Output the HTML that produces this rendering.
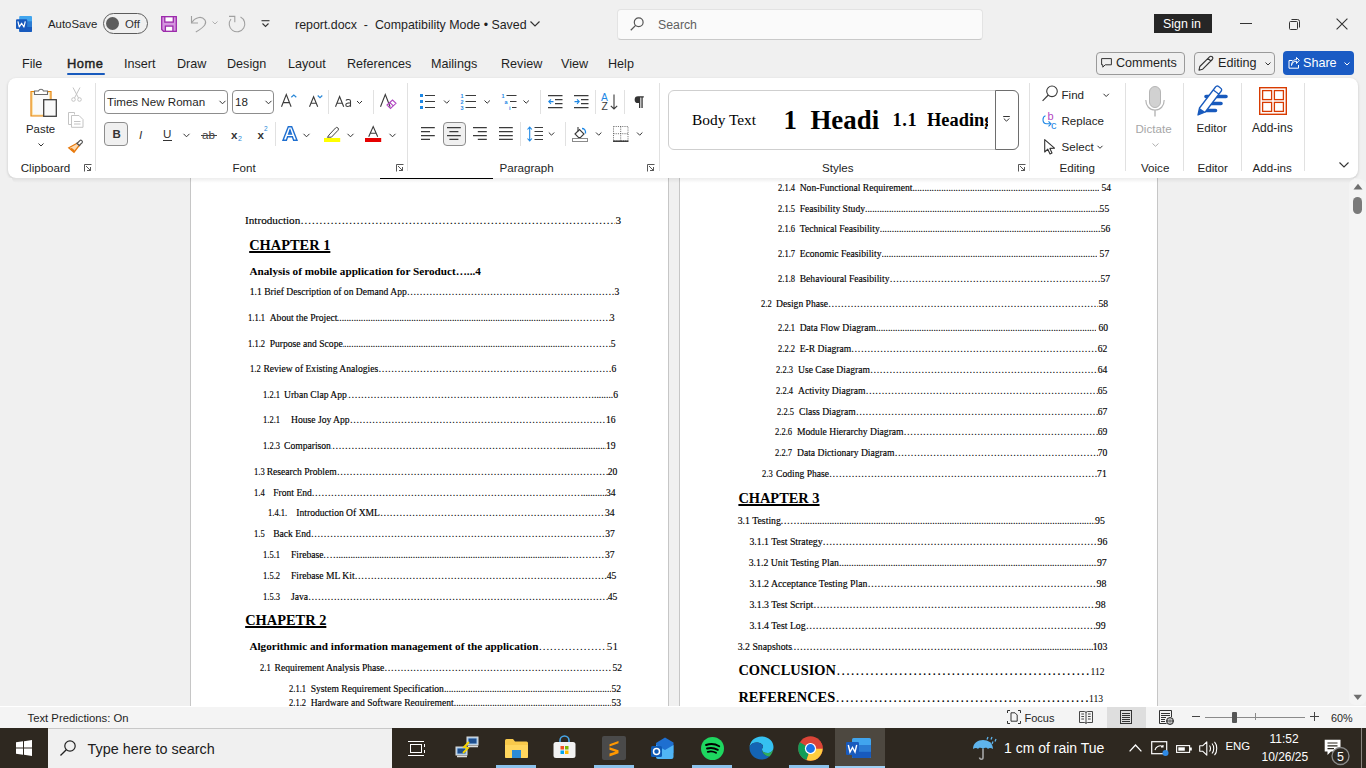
<!DOCTYPE html>
<html><head><meta charset="utf-8">
<style>
*{box-sizing:border-box}
html,body{margin:0;padding:0}
body{width:1366px;height:768px;overflow:hidden;position:relative;background:#f0f0f0;font-family:"Liberation Sans",sans-serif;color:#1f1f1f}
.a{position:absolute}
.t{position:absolute;white-space:nowrap;line-height:1}
svg{position:absolute;overflow:visible}
/* ribbon */
#rib{position:absolute;left:8px;top:78px;width:1350px;height:100px;background:#fff;border-radius:8px;box-shadow:0 1px 3px rgba(0,0,0,.18)}
.sep{position:absolute;width:1px;background:#e1e1e1}
.rl{position:absolute;white-space:nowrap;line-height:1;font-size:11.6px;color:#242424}
/* doc */
#doc{position:absolute;left:0;top:178px;width:1366px;height:528px;background:#f0f0f0;overflow:hidden}
.pg{position:absolute;top:-20px;height:600px;background:#fff;border-left:1px solid #c6c6c6;border-right:1px solid #c6c6c6}
.l{position:absolute;display:flex;white-space:nowrap;line-height:1;font-family:"Liberation Serif",serif;color:#000;font-size:9.6px;-webkit-text-stroke:0.14px #000}
.n{transform:scaleX(.89);transform-origin:0 0}
.l i{flex:1;overflow:hidden;font-style:normal}
.l i.s::before{content:"……………………………………………………………………………………………………………………………………………………………………………………………………"}
.l i.d::before{content:"................................................................................................................................................................................................................................................................................................"}
.b{font-weight:bold;-webkit-text-stroke:0}
.l span{position:relative;z-index:1;background:#fff}
.l i.abs{position:absolute;top:0;bottom:0;overflow:hidden;white-space:nowrap}
.l i.segw{flex:1;overflow:visible}
.u{text-decoration:underline;text-decoration-thickness:1.7px;text-underline-offset:0.6px}
/* status + taskbar */
#status{position:absolute;left:0;top:706px;width:1366px;height:22px;background:#f4f4f4;border-top:1px solid #fff}
#task{position:absolute;left:0;top:728px;width:1366px;height:40px;background:#2e2820}
</style></head>
<body>
<!-- TITLE BAR -->
<svg style="left:16px;top:16px" width="16" height="16" viewBox="0 0 16 16"><rect x="3.2" y="0" width="12.8" height="16" rx="1" fill="#41a5ee"/><rect x="3.2" y="5.3" width="12.8" height="5.4" fill="#2b7cd3"/><path d="M3.2 10.7 H16 V15 A1 1 0 0 1 15 16 H4.2 A1 1 0 0 1 3.2 15 Z" fill="#185abd"/><rect x="0" y="3.2" width="11.2" height="9.8" rx="1" fill="#185abd"/><path d="M1.9 5.3 L3.3 11 L5.6 7.2 L7.9 11 L9.3 5.3" stroke="#fff" stroke-width="1.2" fill="none" stroke-linejoin="round"/></svg>
<div class="t" style="left:48px;top:18.5px;font-size:11.4px;color:#1f1f1f">AutoSave</div>
<div class="a" style="left:103px;top:13px;width:45px;height:21px;border:1px solid #5c5c5c;border-radius:11px"></div>
<div class="a" style="left:106px;top:17px;width:13px;height:13px;border-radius:50%;background:#5c5c5c"></div>
<div class="t" style="left:125px;top:18.5px;font-size:11.4px;color:#333">Off</div>
<svg style="left:161px;top:16px" width="16" height="16" viewBox="0 0 16 16"><path d="M0.7 0.7 H15.3 V15.3 H2.5 L0.7 13.5 Z" fill="#d596df" stroke="#9c2aab" stroke-width="1.3"/><rect x="3.8" y="0.7" width="8.5" height="5.4" fill="#fff" stroke="#9c2aab" stroke-width="1.3"/><rect x="4.4" y="10.1" width="7.5" height="5.2" fill="#fff" stroke="#9c2aab" stroke-width="1.3"/></svg>
<svg style="left:186px;top:12px" width="24" height="24" viewBox="0 0 24 24"><path d="M5.5 4 V11 H12" stroke="#a0a0a0" stroke-width="1.1" fill="none"/><path d="M6 10.5 C8.5 5.5 15.5 3.5 18.8 7.8 C21 11 19.5 14.5 9.8 20" stroke="#a0a0a0" stroke-width="1.1" fill="none"/></svg>
<svg style="left:212px;top:21px" width="6" height="4" viewBox="0 0 6 4"><path d="M0.5 0.5 L3 3 L5.5 0.5" stroke="#b0b0b0" stroke-width="1" fill="none"/></svg>
<svg style="left:226px;top:12px" width="24" height="24" viewBox="0 0 24 24"><path d="M14.5 5 A7.8 7.8 0 1 1 5 7" stroke="#a0a0a0" stroke-width="1.1" fill="none"/><path d="M3 4.4 H8.8 V10.3" stroke="#a0a0a0" stroke-width="1.1" fill="none"/></svg>
<svg style="left:261px;top:20px" width="9" height="8" viewBox="0 0 9 8"><path d="M0.5 0.7 H8.5" stroke="#333" stroke-width="1.1"/><path d="M1.5 3.5 L4.5 6.5 L7.5 3.5" stroke="#333" stroke-width="1.1" fill="none"/></svg>
<div class="t" style="left:295px;top:18.5px;font-size:12.4px;color:#1f1f1f;word-spacing:0px">report.docx&nbsp; - &nbsp;Compatibility Mode • Saved</div>
<svg style="left:530px;top:21px" width="10" height="6" viewBox="0 0 10 6"><path d="M0.5 0.5 L5 5 L9.5 0.5" stroke="#333" stroke-width="1.2" fill="none"/></svg>
<!-- search -->
<div class="a" style="left:617px;top:9px;width:366px;height:31px;background:#fafafa;border:1px solid #e3e3e3;border-bottom-color:#c9c9c9;border-radius:4px"></div>
<svg style="left:630px;top:17px" width="14" height="14" viewBox="0 0 14 14"><circle cx="8.7" cy="5.3" r="4.4" stroke="#555" stroke-width="1.2" fill="none"/><path d="M5.6 8.4 L0.8 13.2" stroke="#555" stroke-width="1.3"/></svg>
<div class="t" style="left:658px;top:18.5px;font-size:12.3px;color:#5f5f5f">Search</div>
<!-- sign in, window controls -->
<div class="a" style="left:1154px;top:14px;width:58px;height:19px;background:#262626"></div>
<div class="t" style="left:1163px;top:18px;font-size:12.4px;color:#fff">Sign in</div>
<div class="a" style="left:1240px;top:23px;width:12px;height:1px;background:#333"></div>
<svg style="left:1289px;top:19px" width="11" height="11" viewBox="0 0 11 11"><rect x="0.5" y="2.5" width="8" height="8" rx="1" stroke="#333" fill="none"/><path d="M2.5 0.5 H8.5 A2 2 0 0 1 10.5 2.5 V8.5" stroke="#333" fill="none"/></svg>
<svg style="left:1336px;top:18px" width="12" height="12" viewBox="0 0 12 12"><path d="M0.6 0.6 L11.4 11.4 M11.4 0.6 L0.6 11.4" stroke="#333" stroke-width="1.1"/></svg>

<!-- TABS -->
<div class="t" style="left:22px;top:57.5px;font-size:12.6px">File</div>
<div class="t" style="left:67px;top:57.5px;font-size:12.9px;color:#1f1f1f;-webkit-text-stroke:0.45px #1f1f1f;letter-spacing:0.55px">Home</div>
<div class="a" style="left:67px;top:73px;width:38px;height:2px;background:#185abd;border-radius:1px"></div>
<div class="t" style="left:124px;top:57.5px;font-size:12.6px">Insert</div>
<div class="t" style="left:177px;top:57.5px;font-size:12.6px">Draw</div>
<div class="t" style="left:227px;top:57.5px;font-size:12.6px">Design</div>
<div class="t" style="left:288px;top:57.5px;font-size:12.6px">Layout</div>
<div class="t" style="left:347px;top:57.5px;font-size:12.6px">References</div>
<div class="t" style="left:431px;top:57.5px;font-size:12.6px">Mailings</div>
<div class="t" style="left:501px;top:57.5px;font-size:12.6px">Review</div>
<div class="t" style="left:561px;top:57.5px;font-size:12.6px">View</div>
<div class="t" style="left:608px;top:57.5px;font-size:12.6px">Help</div>

<div class="a" style="left:1095.5px;top:51.5px;width:89px;height:23px;border:1px solid #9a9a9a;border-radius:4px;background:transparent"></div>
<div class="t" style="left:1116px;top:57px;font-size:12.6px">Comments</div>
<div class="a" style="left:1193.5px;top:51.5px;width:81px;height:23px;border:1px solid #9a9a9a;border-radius:4px;background:transparent"></div>
<div class="t" style="left:1218px;top:57px;font-size:12.6px">Editing</div>
<div class="a" style="left:1283px;top:51px;width:71px;height:24px;border-radius:4px;background:#1a5bc4"></div>
<div class="t" style="left:1303px;top:57px;font-size:12.6px;color:#fff">Share</div>

<!-- RIBBON -->
<div id="rib"></div>
<!--RIB_START-->
<!-- Clipboard group -->
<svg style="left:30px;top:87px" width="27" height="30" viewBox="0 0 27 30">
  <path d="M1 4.5 H21 V14 H13.5 V29 H1 Z" fill="#fbe3b0" stroke="#e8860c" stroke-width="1.2"/>
  <path d="M3 6 H19 V14 H13.5 V27.5 H3 Z" fill="#fafafa"/>
  <path d="M4.5 7.5 V4 H8.5 A2.7 2.7 0 0 1 13.5 4 H17.5 V7.5 Z" fill="#fff" stroke="#6b6b6b" stroke-width="1.1"/>
  <rect x="13.7" y="12.7" width="12.6" height="16.6" fill="#fafafa" stroke="#404040" stroke-width="1.3"/>
</svg>
<div class="rl" style="left:26px;top:123.5px;font-size:11.4px">Paste</div>
<svg style="left:37.5px;top:143px" width="6" height="4" viewBox="0 0 6 4"><path d="M0.5 0.5 L3 3 L5.5 0.5" stroke="#333" stroke-width="1" fill="none"/></svg>
<svg style="left:71px;top:86.5px" width="11" height="15" viewBox="0 0 11 15">
  <path d="M2 0.5 L7.5 11 M9 0.5 L3.5 11" stroke="#c4c4c4" stroke-width="1"/>
  <circle cx="2.5" cy="12.5" r="1.8" stroke="#c4c4c4" fill="none"/><circle cx="8.5" cy="12.5" r="1.8" stroke="#c4c4c4" fill="none"/>
</svg>
<svg style="left:68px;top:112px" width="16" height="16" viewBox="0 0 16 16">
  <path d="M0.5 0.5 H6.5 V2.5 M0.5 0.5 V12.5 H3.5" stroke="#c4c4c4" fill="none"/>
  <path d="M3.5 3.5 H11 L15 7.5 V15.3 H3.5 Z" stroke="#c4c4c4" fill="#fff"/>
  <path d="M6 9.5 H12.5 M6 12 H12.5" stroke="#c4c4c4"/>
</svg>
<svg style="left:68px;top:138px" width="16" height="15" viewBox="0 0 16 15">
  <path d="M9.5 5 L0.8 9.8 L6 14.2 L12 6.5 Z" fill="#fcd9b0" stroke="#e8790c" stroke-width="1.3"/>
  <path d="M3 10.5 L6.2 13" stroke="#e8790c" stroke-width="1.6"/>
  <path d="M9 5.5 L11.8 2.6 A1.6 1.6 0 0 1 14.2 4.6 L11.6 7" stroke="#555" stroke-width="1.2" fill="#fff"/>
  <path d="M8.5 5 L12 8" stroke="#555" stroke-width="1.3"/>
</svg>
<div class="rl" style="left:20.7px;top:162px">Clipboard</div>
<svg style="left:84px;top:164px" width="8" height="8" viewBox="0 0 8 8"><path d="M0.5 7.5 V0.5 H7.5" stroke="#444" fill="none" stroke-width="0.9"/><path d="M2 2 L6.5 6.5 M3 6.5 H6.5 V3" stroke="#444" fill="none" stroke-width="0.9"/></svg>
<div class="sep" style="left:95px;top:83px;height:88px"></div>

<!-- Font group -->
<div class="a" style="left:104px;top:90px;width:124px;height:24px;border:1px solid #8d8d8d;border-radius:4px;background:#fff"></div>
<div class="t" style="left:107px;top:95.5px;font-size:11.6px;color:#1f1f1f">Times New Roman</div>
<svg style="left:219px;top:100px" width="7" height="5" viewBox="0 0 7 5"><path d="M0.5 0.8 L3.5 3.8 L6.5 0.8" stroke="#333" stroke-width="1" fill="none"/></svg>
<div class="a" style="left:232px;top:90px;width:42px;height:24px;border:1px solid #8d8d8d;border-radius:4px;background:#fff"></div>
<div class="t" style="left:235px;top:96px;font-size:11.6px;color:#1f1f1f">18</div>
<svg style="left:264.5px;top:100px" width="7" height="5" viewBox="0 0 7 5"><path d="M0.5 0.8 L3.5 3.8 L6.5 0.8" stroke="#333" stroke-width="1" fill="none"/></svg>
<svg style="left:281px;top:94px" width="16" height="13" viewBox="0 0 16 13"><path d="M0.5 12.8 L5.3 0.5 L10.1 12.8 M2.2 8.6 H8.4" stroke="#3b3b3b" stroke-width="1.1" fill="none"/><path d="M10.3 3.3 L12.8 1 L15.3 3.3" stroke="#2b88d8" stroke-width="1.2" fill="none"/></svg>
<svg style="left:308.5px;top:95px" width="14" height="12" viewBox="0 0 14 12"><path d="M0.5 11.8 L4.6 1.8 L8.7 11.8 M2 8.3 H7.2" stroke="#3b3b3b" stroke-width="1.1" fill="none"/><path d="M8.7 0.5 L11 2.7 L13.3 0.5" stroke="#2b88d8" stroke-width="1.2" fill="none"/></svg>
<div class="sep" style="left:328px;top:90px;height:24px"></div>
<svg style="left:335px;top:96px" width="28" height="11" viewBox="0 0 28 11"><path d="M0.5 10.8 L4.6 0.5 L8.7 10.8 M2 7.3 H7.2" stroke="#3b3b3b" stroke-width="1.1" fill="none"/><path d="M11 4.5 C11.5 3 15.5 3 15.5 5 V10.8 M15.5 6.8 C12 6.8 10.8 7.5 10.8 9 C10.8 10.8 14 11 15.5 9" stroke="#3b3b3b" stroke-width="1.1" fill="none"/><path d="M22 5 L24.5 7.5 L27 5" stroke="#333" stroke-width="1" fill="none"/></svg>
<div class="sep" style="left:373px;top:90px;height:24px"></div>
<svg style="left:380px;top:94px" width="17" height="16" viewBox="0 0 17 16"><path d="M0.5 12.8 L5.3 0.5 L10.1 12.8" stroke="#3b3b3b" stroke-width="1.1" fill="none"/><path d="M7 11 L12.5 6 L16 9.3 L10.5 14.5 Z M9.8 8.5 L13.3 11.8" stroke="#b146c2" stroke-width="1.1" fill="none"/></svg>
<div class="sep" style="left:407px;top:83px;height:88px"></div>

<div class="a" style="left:104px;top:122px;width:24px;height:24px;border:1px solid #8d8d8d;border-radius:4px;background:#f0f0f0"></div>
<div class="t" style="left:112.5px;top:128.5px;font-size:11.5px;font-weight:bold;color:#333">B</div>
<div class="t" style="left:139px;top:129px;font-size:11.6px;font-style:italic;color:#333">I</div>
<div class="t" style="left:163px;top:128px;font-size:11.6px;color:#333">U</div>
<div class="a" style="left:163px;top:140px;width:9px;height:1px;background:#333"></div>
<svg style="left:183px;top:132.5px" width="7" height="5" viewBox="0 0 7 5"><path d="M0.5 0.8 L3.5 3.8 L6.5 0.8" stroke="#333" stroke-width="1" fill="none"/></svg>
<div class="t" style="left:202px;top:128.5px;font-size:11.6px;color:#444">ab</div>
<div class="a" style="left:201px;top:135px;width:16px;height:1px;background:#444"></div>
<div class="t" style="left:231px;top:128.5px;font-size:11.6px;color:#333;font-weight:bold">x</div>
<div class="t" style="left:238px;top:135px;font-size:7px;color:#2b88d8">2</div>
<div class="t" style="left:257.5px;top:128.5px;font-size:11.6px;color:#333;font-weight:bold">x</div>
<div class="t" style="left:264px;top:126px;font-size:6.5px;color:#2b88d8">2</div>
<div class="sep" style="left:275px;top:122px;height:24px"></div>
<svg style="left:282px;top:126px" width="16" height="15" viewBox="0 0 16 15"><path d="M1 14.2 L6.3 0.8 H9.7 L15 14.2 H11.6 L10.4 10.8 H5.6 L4.4 14.2 Z M6.6 8 H9.4 L8 4 Z" fill="#fff" stroke="#1e6fd0" stroke-width="1.4"/><path d="M7 5.5 L8 3.5 L9 5.5" fill="#1e6fd0"/></svg>
<svg style="left:303px;top:132.5px" width="7" height="5" viewBox="0 0 7 5"><path d="M0.5 0.8 L3.5 3.8 L6.5 0.8" stroke="#333" stroke-width="1" fill="none"/></svg>
<svg style="left:324px;top:126px" width="17" height="16" viewBox="0 0 17 16"><path d="M5 9 L11.5 2 A1.6 1.6 0 0 1 14 4.3 L7.4 11.2 L3.6 11.2 Z" stroke="#444" stroke-width="1" fill="#fff"/><path d="M3.6 11.2 L2 12.5 H5.5" fill="#666"/><rect x="0" y="12" width="16.2" height="4" fill="#ffff00"/></svg>
<svg style="left:347px;top:132.5px" width="7" height="5" viewBox="0 0 7 5"><path d="M0.5 0.8 L3.5 3.8 L6.5 0.8" stroke="#333" stroke-width="1" fill="none"/></svg>
<svg style="left:365px;top:126px" width="17" height="16" viewBox="0 0 17 16"><path d="M3.7 10.8 L8.2 0.5 L12.7 10.8 M5.2 7.3 H11.2" stroke="#3b3b3b" stroke-width="1.1" fill="none"/><rect x="0" y="12" width="16.2" height="4" fill="#e60000"/></svg>
<svg style="left:388.5px;top:132.5px" width="7" height="5" viewBox="0 0 7 5"><path d="M0.5 0.8 L3.5 3.8 L6.5 0.8" stroke="#333" stroke-width="1" fill="none"/></svg>
<div class="rl" style="left:232.5px;top:162px">Font</div>
<svg style="left:396px;top:164px" width="8" height="8" viewBox="0 0 8 8"><path d="M0.5 7.5 V0.5 H7.5" stroke="#444" fill="none" stroke-width="0.9"/><path d="M2 2 L6.5 6.5 M3 6.5 H6.5 V3" stroke="#444" fill="none" stroke-width="0.9"/></svg>

<!-- Paragraph group -->
<svg style="left:420px;top:94px" width="30" height="15" viewBox="0 0 30 15"><rect x="0" y="0" width="3" height="3" fill="#1e88e5"/><rect x="0" y="6" width="3" height="3" fill="#1e88e5"/><rect x="0" y="12" width="3" height="3" fill="#1e88e5"/><path d="M5 1.5 H15 M5 7.5 H15 M5 13.5 H15" stroke="#3b3b3b" stroke-width="1.1"/><path d="M24 6.5 L26.7 9.2 L29.4 6.5" stroke="#333" fill="none"/></svg>
<svg style="left:460px;top:93px" width="31" height="17" viewBox="0 0 31 17"><text x="0.5" y="5" font-size="5.5" font-family="Liberation Sans" fill="#1e88e5" font-weight="bold">1</text><text x="0.5" y="11" font-size="5.5" font-family="Liberation Sans" fill="#1e88e5" font-weight="bold">2</text><text x="0.5" y="17" font-size="5.5" font-family="Liberation Sans" fill="#1e88e5" font-weight="bold">3</text><path d="M5.5 2.5 H16 M5.5 8.5 H16 M5.5 14.5 H16" stroke="#3b3b3b" stroke-width="1.1"/><path d="M24.5 7.5 L27.2 10.2 L29.9 7.5" stroke="#333" fill="none"/></svg>
<svg style="left:501px;top:93px" width="29" height="17" viewBox="0 0 29 17"><text x="0.5" y="5" font-size="5.5" font-family="Liberation Sans" fill="#1e88e5" font-weight="bold">1</text><text x="3.5" y="11" font-size="5.5" font-family="Liberation Sans" fill="#1e88e5" font-weight="bold">a</text><text x="8" y="17" font-size="5.5" font-family="Liberation Sans" fill="#1e88e5" font-weight="bold">i</text><path d="M5.5 2.5 H15.5 M9 8.5 H15.5 M11 14.5 H15.5" stroke="#3b3b3b" stroke-width="1.1"/><path d="M22.5 7.5 L25.2 10.2 L27.9 7.5" stroke="#333" fill="none"/></svg>
<div class="sep" style="left:540px;top:90px;height:24px"></div>
<svg style="left:547.5px;top:94.5px" width="15" height="14" viewBox="0 0 15 14"><path d="M0 0.6 H14.5 M7 4.6 H14.5 M7 8.6 H14.5 M0 12.6 H14.5" stroke="#3b3b3b" stroke-width="1.1"/><path d="M5.5 6.6 H0.8 M3 4.4 L0.8 6.6 L3 8.8" stroke="#1e88e5" stroke-width="1.1" fill="none"/></svg>
<svg style="left:573.5px;top:94.5px" width="15" height="14" viewBox="0 0 15 14"><path d="M0 0.6 H14.5 M7 4.6 H14.5 M7 8.6 H14.5 M0 12.6 H14.5" stroke="#3b3b3b" stroke-width="1.1"/><path d="M0.5 6.6 H5.2 M3 4.4 L5.2 6.6 L3 8.8" stroke="#1e88e5" stroke-width="1.1" fill="none"/></svg>
<div class="sep" style="left:595px;top:90px;height:24px"></div>
<svg style="left:601px;top:94px" width="18" height="16" viewBox="0 0 18 16"><text x="0" y="7.3" font-size="10.3" font-family="Liberation Sans" fill="#1e88e5">A</text><text x="0.5" y="15.6" font-size="10.3" font-family="Liberation Sans" fill="#3b3b3b">Z</text><path d="M13 0.5 V15 M9.8 11.8 L13 15 L16.2 11.8" stroke="#3b3b3b" stroke-width="1.1" fill="none"/></svg>
<div class="sep" style="left:624px;top:90px;height:24px"></div>
<svg style="left:634px;top:96px" width="10" height="12" viewBox="0 0 10 12"><path d="M4 0.3 H9.8 V1.6 H8.7 V12 H7.4 V1.6 H6.3 V12 H5 V7 H4 A3.35 3.35 0 0 1 4 0.3 Z" fill="#333"/></svg>

<svg style="left:421px;top:127px" width="14" height="13" viewBox="0 0 14 13"><path d="M0 0.6 H13.8 M0 4.6 H9 M0 8.6 H13.8 M0 12.4 H9" stroke="#3b3b3b" stroke-width="1.1"/></svg>
<div class="a" style="left:442.5px;top:122px;width:23px;height:23.5px;border:1px solid #8d8d8d;border-radius:4px;background:#f0f0f0"></div>
<svg style="left:447px;top:127px" width="14" height="13" viewBox="0 0 14 13"><path d="M0 0.6 H13.8 M2.4 4.6 H11.4 M0 8.6 H13.8 M2.4 12.4 H11.4" stroke="#3b3b3b" stroke-width="1.1"/></svg>
<svg style="left:473px;top:127px" width="14" height="13" viewBox="0 0 14 13"><path d="M0 0.6 H13.8 M4.8 4.6 H13.8 M0 8.6 H13.8 M4.8 12.4 H13.8" stroke="#3b3b3b" stroke-width="1.1"/></svg>
<svg style="left:499px;top:127px" width="14" height="13" viewBox="0 0 14 13"><path d="M0 0.6 H13.8 M0 4.6 H13.8 M0 8.6 H13.8 M0 12.4 H13.8" stroke="#3b3b3b" stroke-width="1.1"/></svg>
<div class="sep" style="left:520px;top:122px;height:24px"></div>
<svg style="left:527px;top:126px" width="28" height="16" viewBox="0 0 28 16"><path d="M2.7 1 V15 M0.5 3.5 L2.7 1 L4.9 3.5 M0.5 12.5 L2.7 15 L4.9 12.5" stroke="#1e88e5" stroke-width="1.1" fill="none"/><path d="M7.5 1.5 H16 M7.5 5.5 H16 M7.5 9.5 H16 M7.5 13.5 H16" stroke="#3b3b3b" stroke-width="1"/><path d="M21.8 6.5 L24.5 9.2 L27.2 6.5" stroke="#333" fill="none"/></svg>
<div class="sep" style="left:565px;top:122px;height:24px"></div>
<svg style="left:572px;top:126px" width="30" height="16" viewBox="0 0 30 16"><path d="M3 8 L7.5 3.5 L12 8 L8.5 11.5 H6.5 Z" stroke="#3b3b3b" stroke-width="1.1" fill="#fff"/><path d="M6 1 V5.5" stroke="#3b3b3b" stroke-width="1.1"/><path d="M10 2.5 C12 2.5 14 4 13.5 7.5" stroke="#1e88e5" stroke-width="1.3" fill="none"/><rect x="0.5" y="12.5" width="15" height="3" stroke="#8a8a8a" fill="#fff"/><path d="M24 6.5 L26.7 9.2 L29.4 6.5" stroke="#333" fill="none"/></svg>
<svg style="left:613px;top:126px" width="30" height="16" viewBox="0 0 30 16"><path d="M0.5 0.5 H15 V15 H0.5 Z M0.5 7.7 H15 M7.7 0.5 V15" stroke="#555" stroke-width="0.9" stroke-dasharray="1 1.2" fill="none"/><path d="M0 15.2 H15.5" stroke="#222" stroke-width="1.3"/><path d="M24 6.5 L26.7 9.2 L29.4 6.5" stroke="#333" fill="none"/></svg>
<div class="rl" style="left:499.5px;top:162px">Paragraph</div>
<svg style="left:647px;top:164px" width="8" height="8" viewBox="0 0 8 8"><path d="M0.5 7.5 V0.5 H7.5" stroke="#444" fill="none" stroke-width="0.9"/><path d="M2 2 L6.5 6.5 M3 6.5 H6.5 V3" stroke="#444" fill="none" stroke-width="0.9"/></svg>
<div class="sep" style="left:659px;top:83px;height:88px"></div>

<!-- Styles -->
<div class="a" style="left:668px;top:90px;width:351px;height:60px;border:1px solid #cfcfcf;border-radius:6px;background:#fff;overflow:hidden">
  <div class="t" style="left:23px;top:20.5px;font-size:15.4px;font-family:'Liberation Serif',serif;color:#000">Body Text</div>
  <div class="t" style="left:114.5px;top:16.3px;font-size:26.9px;font-family:'Liberation Serif',serif;font-weight:bold;color:#000">1&nbsp; Headi</div>
  <div class="t" style="left:223.5px;top:20px;font-size:18.4px;font-family:'Liberation Serif',serif;font-weight:bold;color:#000;letter-spacing:0.6px">1.1</div><div class="t" style="left:258px;top:20px;width:61px;overflow:hidden;font-size:18.4px;font-family:'Liberation Serif',serif;font-weight:bold;color:#000">Heading</div>
</div>
<div class="a" style="left:995px;top:90px;width:24px;height:60px;border:1px solid #6e6e6e;border-radius:0 6px 6px 0;background:#fff"></div>
<svg style="left:1003px;top:116px" width="7" height="6" viewBox="0 0 7 6"><path d="M0.2 0.5 H6.8" stroke="#333"/><path d="M0.8 2.5 L3.5 5.2 L6.2 2.5" stroke="#333" fill="none"/></svg>
<div class="rl" style="left:822px;top:162px">Styles</div>
<svg style="left:1018px;top:164px" width="8" height="8" viewBox="0 0 8 8"><path d="M0.5 7.5 V0.5 H7.5" stroke="#444" fill="none" stroke-width="0.9"/><path d="M2 2 L6.5 6.5 M3 6.5 H6.5 V3" stroke="#444" fill="none" stroke-width="0.9"/></svg>
<div class="sep" style="left:1029px;top:83px;height:88px"></div>

<!-- Editing -->
<svg style="left:1042px;top:85px" width="16" height="17" viewBox="0 0 16 17"><circle cx="10" cy="6.3" r="5.3" stroke="#3b3b3b" stroke-width="1.1" fill="none"/><path d="M6.3 10 L0.6 15.8" stroke="#3b3b3b" stroke-width="1.2"/></svg>
<div class="rl" style="left:1061.5px;top:88.5px">Find</div>
<svg style="left:1102.5px;top:92.5px" width="7" height="5" viewBox="0 0 7 5"><path d="M0.5 0.8 L3.2 3.5 L5.9 0.8" stroke="#333" stroke-width="1" fill="none"/></svg>
<div class="t" style="left:1047.5px;top:111px;font-size:11px;color:#b146c2">b</div>
<div class="t" style="left:1051px;top:119.5px;font-size:11px;color:#1e88e5">c</div>
<svg style="left:1041.5px;top:115px" width="10" height="13" viewBox="0 0 10 13"><path d="M3.5 0.8 C0 2 0 8.5 4.5 8.8 H9" stroke="#1e88e5" stroke-width="1.1" fill="none"/><path d="M6.5 6.3 L9 8.8 L6.5 11.3" stroke="#1e88e5" stroke-width="1.1" fill="none"/></svg>
<div class="rl" style="left:1061.5px;top:114.5px">Replace</div>
<svg style="left:1043.5px;top:138.5px" width="12" height="16" viewBox="0 0 12 16"><path d="M0.7 0.7 V13 L3.8 10.2 L6 15 L8 14 L5.9 9.4 L10.5 9.2 Z" stroke="#333" stroke-width="1.1" fill="#fff" stroke-linejoin="round"/></svg>
<div class="rl" style="left:1061.5px;top:140.5px">Select</div>
<svg style="left:1096.5px;top:145px" width="7" height="5" viewBox="0 0 7 5"><path d="M0.5 0.8 L3 3.3 L5.5 0.8" stroke="#333" stroke-width="1" fill="none"/></svg>
<div class="rl" style="left:1059.5px;top:162px">Editing</div>
<div class="sep" style="left:1125px;top:83px;height:88px"></div>

<!-- Voice -->
<svg style="left:1145px;top:85.5px" width="20" height="31" viewBox="0 0 20 31"><rect x="4.5" y="0.5" width="11" height="21" rx="5.5" fill="#d1d1d1" stroke="#b5b5b5"/><path d="M0.8 14 C0.8 20 4.5 24 10 24 C15.5 24 19.2 20 19.2 14" stroke="#b5b5b5" stroke-width="1.2" fill="none"/><path d="M10 24 V30.5" stroke="#b5b5b5" stroke-width="1.4"/></svg>
<div class="rl" style="left:1135.5px;top:123px;color:#a6a6a6">Dictate</div>
<svg style="left:1151.5px;top:143px" width="7" height="4" viewBox="0 0 7 4"><path d="M0.5 0.5 L3.5 3.3 L6.5 0.5" stroke="#b0b0b0" stroke-width="1" fill="none"/></svg>
<div class="rl" style="left:1141px;top:162px">Voice</div>
<div class="sep" style="left:1183px;top:83px;height:88px"></div>

<!-- Editor -->
<svg style="left:1197px;top:85px" width="32" height="31" viewBox="0 0 32 31"><path d="M9 11.5 H29 M8 18.5 H24 M7 25.5 H18.5" stroke="#185abd" stroke-width="3.6" stroke-linecap="round"/><path d="M1 30 L2.5 23 L18.5 2 A2 2 0 0 1 21.3 1.3 L23.8 3.2 A2 2 0 0 1 24.3 6 L8.3 27 Z" stroke="#185abd" stroke-width="1.3" fill="#fff" stroke-linejoin="round"/><path d="M16.3 5 L22 9.3" stroke="#185abd" stroke-width="1.2"/><path d="M1 30 L2.5 23 L8.3 27 Z" fill="#185abd"/></svg>
<div class="rl" style="left:1196.5px;top:122px">Editor</div>
<div class="rl" style="left:1197.5px;top:162px">Editor</div>
<div class="sep" style="left:1241px;top:83px;height:88px"></div>

<!-- Add-ins -->
<svg style="left:1259px;top:87px" width="28" height="28" viewBox="0 0 28 28"><rect x="0.7" y="0.7" width="26.6" height="26.6" stroke="#d83b01" stroke-width="1.4" fill="none"/><rect x="3.6" y="3.6" width="9" height="9" stroke="#d83b01" stroke-width="1.3" fill="none"/><rect x="15.4" y="3.6" width="9" height="9" stroke="#d83b01" stroke-width="1.3" fill="none"/><rect x="3.6" y="15.4" width="9" height="9" stroke="#d83b01" stroke-width="1.3" fill="none"/><rect x="15.4" y="15.4" width="9" height="9" stroke="#d83b01" stroke-width="1.3" fill="none"/></svg>
<div class="rl" style="left:1252px;top:122px;font-size:12px">Add-ins</div>
<div class="rl" style="left:1252.5px;top:162px">Add-ins</div>
<div class="sep" style="left:1304px;top:83px;height:88px"></div>
<svg style="left:1338.5px;top:161.5px" width="10" height="6" viewBox="0 0 10 6"><path d="M0.5 0.5 L5 5 L9.5 0.5" stroke="#333" stroke-width="1.1" fill="none"/></svg>
<!--RIB_END-->

<!-- DOCUMENT -->
<div id="doc">
<div class="pg" style="left:190px;width:479px"></div>
<div class="pg" style="left:679px;width:479px"></div>
<!--DL_START-->
<div class="l" style="left:245px;top:36.62px;width:376.0px;font-size:11.2px"><span>Introduction</span><i class="s"></i><span>3</span></div>
<div class="l b u" style="left:249.2px;top:59.64px;font-size:14.4px">CHAPTER 1</div>
<div class="l b" style="left:249.4px;top:87.62px;font-size:11.2px">Analysis of mobile application for Seroduct…...4</div>
<div class="l" style="left:249.8px;top:108.76px;width:369.4px;font-size:9.6px"><span>1.1 Brief Description of on Demand App</span><i class="s"></i><span>3</span></div>
<div class="l n" style="left:248px;top:134.76px;font-size:9.6px">1.1.1</div>
<div class="l" style="left:269.7px;top:134.76px;width:344.8px;font-size:9.6px"><span>About the Project</span><i class="segw"><i class="d abs" style="left:0.0px;width:300.3px;"></i><i class="s abs" style="left:300.3px;right:0;"></i></i><span>3</span></div>
<div class="l n" style="left:248px;top:160.56px;font-size:9.6px">1.1.2</div>
<div class="l" style="left:269.7px;top:160.56px;width:345.9px;font-size:9.6px"><span>Purpose and Scope</span><i class="segw"><i class="d abs" style="left:0.0px;width:300.3px;"></i><i class="s abs" style="left:300.3px;right:0;"></i></i><span>5</span></div>
<div class="l n" style="left:249.8px;top:185.56px;font-size:9.6px">1.2</div>
<div class="l" style="left:263.4px;top:185.56px;width:352.9px;font-size:9.6px"><span>Review of Existing Analogies</span><i class="s"></i><span>6</span></div>
<div class="l n" style="left:262.8px;top:212.06px;font-size:9.6px">1.2.1</div>
<div class="l" style="left:284px;top:212.06px;width:334.0px;font-size:9.6px"><span>Urban Clap App</span><i class="segw"><i class="s abs" style="left:0.0px;width:310.0px;"></i><i class="d abs" style="left:310.0px;right:0;"></i></i><span>6</span></div>
<div class="l n" style="left:262.8px;top:236.76px;font-size:9.6px">1.2.1</div>
<div class="l" style="left:291px;top:236.76px;width:324.6px;font-size:9.6px"><span>House Joy App</span><i class="s"></i><span>16</span></div>
<div class="l n" style="left:262.8px;top:262.76px;font-size:9.6px">1.2.3</div>
<div class="l" style="left:284px;top:262.76px;width:331.6px;font-size:9.6px"><span>Comparison </span><i class="segw"><i class="s abs" style="left:0.0px;width:273.0px;"></i><i class="d abs" style="left:273.0px;right:0;"></i></i><span>19</span></div>
<div class="l n" style="left:254px;top:289.16px;font-size:9.6px">1.3</div>
<div class="l" style="left:266.7px;top:289.16px;width:350.7px;font-size:9.6px"><span>Research Problem</span><i class="s"></i><span>20</span></div>
<div class="l n" style="left:254px;top:309.66px;font-size:9.6px">1.4</div>
<div class="l" style="left:273.2px;top:309.66px;width:342.4px;font-size:9.6px"><span>Front End</span><i class="segw"><i class="s abs" style="left:0.0px;width:309.8px;"></i><i class="d abs" style="left:309.8px;right:0;"></i></i><span>34</span></div>
<div class="l n" style="left:268px;top:329.56px;font-size:9.6px">1.4.1.</div>
<div class="l" style="left:296.3px;top:329.56px;width:318.2px;font-size:9.6px"><span>Introduction Of XML</span><i class="s"></i><span>34</span></div>
<div class="l n" style="left:254px;top:351.46px;font-size:9.6px">1.5</div>
<div class="l" style="left:273.2px;top:351.46px;width:341.6px;font-size:9.6px"><span>Back End</span><i class="s"></i><span>37</span></div>
<div class="l n" style="left:262.8px;top:372.26px;font-size:9.6px">1.5.1</div>
<div class="l" style="left:291px;top:372.26px;width:323.5px;font-size:9.6px"><span>Firebase</span><i class="segw"><i class="s abs" style="left:0.0px;width:45.0px;"></i><i class="d abs" style="left:45.0px;width:230.0px;"></i><i class="s abs" style="left:275.0px;right:0;"></i></i><span>37</span></div>
<div class="l n" style="left:262.8px;top:393.36px;font-size:9.6px">1.5.2</div>
<div class="l" style="left:291px;top:393.36px;width:325.3px;font-size:9.6px"><span>Firebase ML Kit</span><i class="s"></i><span>45</span></div>
<div class="l n" style="left:262.8px;top:414.16px;font-size:9.6px">1.5.3</div>
<div class="l" style="left:291px;top:414.16px;width:326.4px;font-size:9.6px"><span>Java</span><i class="s"></i><span>45</span></div>
<div class="l b u" style="left:245.2px;top:434.74px;font-size:14.4px">CHAPETR 2</div>
<div class="l b" style="left:249.4px;top:462.62px;width:368.6px;font-size:11.2px"><span>Algorithmic and information management of the application</span><i class="s" style="font-weight:normal"></i><span style="font-weight:normal">51</span></div>
<div class="l n" style="left:260px;top:484.66px;font-size:9.6px">2.1</div>
<div class="l" style="left:274.5px;top:484.66px;width:347.5px;font-size:9.6px"><span>Requirement Analysis Phase</span><i class="s"></i><span>52</span></div>
<div class="l n" style="left:289px;top:505.76px;font-size:9.6px">2.1.1</div>
<div class="l" style="left:310.7px;top:505.76px;width:310.3px;font-size:9.6px"><span>System Requirement Specification</span><i class="d"></i><span>52</span></div>
<div class="l n" style="left:289px;top:519.56px;font-size:9.6px">2.1.2</div>
<div class="l" style="left:310.7px;top:519.56px;width:310.3px;font-size:9.6px"><span>Hardware and Software Requirement </span><i class="d"></i><span>53</span></div>
<div class="l n" style="left:777.9px;top:4.96px;font-size:9.6px">2.1.4</div>
<div class="l" style="left:799.7px;top:4.96px;width:311.3px;font-size:9.6px"><span>Non-Functional Requirement</span><i class="d"></i><span>&nbsp;54</span></div>
<div class="l n" style="left:777.9px;top:25.96px;font-size:9.6px">2.1.5</div>
<div class="l" style="left:799.7px;top:25.96px;width:309.5px;font-size:9.6px"><span>Feasibility Study</span><i class="d"></i><span>55</span></div>
<div class="l n" style="left:777.9px;top:45.96px;font-size:9.6px">2.1.6</div>
<div class="l" style="left:799.7px;top:45.96px;width:310.6px;font-size:9.6px"><span>Technical Feasibility </span><i class="d"></i><span>56</span></div>
<div class="l n" style="left:777.9px;top:70.96px;font-size:9.6px">2.1.7</div>
<div class="l" style="left:799.7px;top:70.96px;width:309.5px;font-size:9.6px"><span>Economic Feasibility</span><i class="d"></i><span>&nbsp;57</span></div>
<div class="l n" style="left:777.9px;top:95.86px;font-size:9.6px">2.1.8</div>
<div class="l" style="left:799.7px;top:95.86px;width:310.3px;font-size:9.6px"><span>Behavioural Feasibility</span><i class="s"></i><span>57</span></div>
<div class="l n" style="left:760.8px;top:120.76px;font-size:9.6px">2.2</div>
<div class="l" style="left:776px;top:120.76px;width:332.0px;font-size:9.6px"><span>Design Phase</span><i class="s"></i><span>58</span></div>
<div class="l n" style="left:778px;top:144.56px;font-size:9.6px">2.2.1</div>
<div class="l" style="left:799.7px;top:144.56px;width:308.3px;font-size:9.6px"><span>Data Flow Diagram</span><i class="d"></i><span>&nbsp;60</span></div>
<div class="l n" style="left:778px;top:165.76px;font-size:9.6px">2.2.2</div>
<div class="l" style="left:799.7px;top:165.76px;width:307.7px;font-size:9.6px"><span>E-R Diagram</span><i class="s"></i><span>62</span></div>
<div class="l n" style="left:776.1px;top:186.66px;font-size:9.6px">2.2.3</div>
<div class="l" style="left:798px;top:186.66px;width:309.4px;font-size:9.6px"><span>Use Case Diagram</span><i class="s"></i><span>64</span></div>
<div class="l n" style="left:776px;top:207.86px;font-size:9.6px">2.2.4</div>
<div class="l" style="left:798px;top:207.86px;width:309.4px;font-size:9.6px"><span>Activity Diagram</span><i class="s"></i><span>65</span></div>
<div class="l n" style="left:777px;top:228.66px;font-size:9.6px">2.2.5</div>
<div class="l" style="left:799px;top:228.66px;width:308.4px;font-size:9.6px"><span>Class Diagram</span><i class="s"></i><span>67</span></div>
<div class="l n" style="left:775.4px;top:248.86px;font-size:9.6px">2.2.6</div>
<div class="l" style="left:797px;top:248.86px;width:310.4px;font-size:9.6px"><span>Module Hierarchy Diagram</span><i class="s"></i><span>69</span></div>
<div class="l n" style="left:775.4px;top:270.36px;font-size:9.6px">2.2.7</div>
<div class="l" style="left:797px;top:270.36px;width:310.4px;font-size:9.6px"><span>Data Dictionary Diagram</span><i class="s"></i><span>70</span></div>
<div class="l n" style="left:761.5px;top:290.86px;font-size:9.6px">2.3</div>
<div class="l" style="left:776px;top:290.86px;width:330.7px;font-size:9.6px"><span>Coding Phase</span><i class="s"></i><span>71</span></div>
<div class="l b u" style="left:738.4px;top:313.14px;font-size:14.4px">CHAPTER 3</div>
<div class="l" style="left:737.7px;top:337.79px;width:367.1px;font-size:9.8px"><span>3.1 Testing</span><i class="segw"><i class="s abs" style="left:0.0px;width:62.3px;"></i><i class="d abs" style="left:62.3px;right:0;"></i></i><span>95</span></div>
<div class="l" style="left:749.4px;top:358.79px;width:358.0px;font-size:9.8px"><span>3.1.1 Test Strategy</span><i class="s"></i><span>96</span></div>
<div class="l" style="left:748.7px;top:379.59px;width:358.0px;font-size:9.8px"><span>3.1.2 Unit Testing Plan</span><i class="d"></i><span>97</span></div>
<div class="l" style="left:749.4px;top:400.89px;width:356.9px;font-size:9.8px"><span>3.1.2 Acceptance Testing Plan</span><i class="s"></i><span>98</span></div>
<div class="l" style="left:749.4px;top:422.29px;width:356.2px;font-size:9.8px"><span>3.1.3 Test Script</span><i class="s"></i><span>98</span></div>
<div class="l" style="left:749.4px;top:442.59px;width:356.2px;font-size:9.8px"><span>3.1.4 Test Log</span><i class="s"></i><span>99</span></div>
<div class="l" style="left:737.7px;top:464.39px;width:369.7px;font-size:9.8px"><span>3.2 Snapshots</span><i class="segw"><i class="s abs" style="left:0.0px;width:287.3px;"></i><i class="d abs" style="left:287.3px;right:0;"></i></i><span>103</span></div>
<div class="l b" style="left:738.4px;top:484.84px;width:366.1px;font-size:14.4px;align-items:baseline"><span>CONCLUSION</span><i class="s" style="font-weight:normal"></i><span style="font-size:9.6px;font-weight:normal">112</span></div>
<div class="l b" style="left:738.4px;top:511.74px;width:364.6px;font-size:14.4px;align-items:baseline"><span>REFERENCES</span><i class="s" style="font-weight:normal"></i><span style="font-size:9.6px;font-weight:normal">113</span></div>
<!--DL_END-->
</div>

<!-- STATUS -->
<div id="status"></div>
<div class="t" style="left:27.5px;top:713px;font-size:11.3px;color:#1f1f1f">Text Predictions: On</div>

<!-- TASKBAR -->
<div id="task"></div>
<div class="a" style="left:48px;top:728px;width:344px;height:40px;background:#f0f0f0;border-top:1px solid #c8c8c8"></div>
<div class="t" style="left:87.5px;top:742px;font-size:14.4px;color:#202020">Type here to search</div>
<!--EX_START-->
<!-- buttons icons -->
<svg style="left:1100.5px;top:58px" width="11" height="10" viewBox="0 0 11 10"><path d="M0.6 0.6 H10.4 V6.8 H4.2 L1.8 9.2 V6.8 H0.6 Z" stroke="#333" stroke-width="1" fill="none" stroke-linejoin="round"/></svg>
<svg style="left:1198px;top:55.5px" width="16" height="15" viewBox="0 0 16 15"><path d="M1 14.2 L1.8 10.5 L11.5 0.8 A1.6 1.6 0 0 1 14.3 3.5 L4.5 13.3 Z M10 2.3 L12.8 5" stroke="#333" stroke-width="1.1" fill="none" stroke-linejoin="round"/></svg>
<svg style="left:1264.5px;top:62px" width="6" height="4" viewBox="0 0 6 4"><path d="M0.5 0.5 L3 3 L5.5 0.5" stroke="#333" stroke-width="1" fill="none"/></svg>
<svg style="left:1287.5px;top:57px" width="12" height="12" viewBox="0 0 12 12"><path d="M4.5 3.5 H1 V11.2 H10.5 V8" stroke="#fff" stroke-width="1" fill="none"/><path d="M3.5 8.5 C4 5.5 6 4.2 8.5 4.2 V6.5 L11.3 3.3 L8.5 0.5 V2.5 C5.5 2.5 3.8 5 3.5 8.5 Z" stroke="#fff" stroke-width="1" fill="none" stroke-linejoin="round"/></svg>
<svg style="left:1343.5px;top:62px" width="6" height="4" viewBox="0 0 6 4"><path d="M0.5 0.5 L3 3 L5.5 0.5" stroke="#fff" stroke-width="1" fill="none"/></svg>

<!-- page header line + shadow under ribbon -->
<div class="a" style="left:379.5px;top:178.2px;width:113.5px;height:1.2px;background:#000"></div>
<div class="a" style="left:12px;top:178px;width:1342px;height:5px;background:linear-gradient(rgba(0,0,0,.07),rgba(0,0,0,0));border-radius:0 0 6px 6px"></div>

<!-- scrollbar -->
<div class="a" style="left:1349px;top:179px;width:17px;height:526px;background:#f4f4f4;border-radius:6px"></div>
<svg style="left:1352.5px;top:183px" width="10" height="7" viewBox="0 0 10 7"><path d="M0.5 6.5 L5 0.8 L9.5 6.5 Z" fill="#6e6e6e"/></svg>
<div class="a" style="left:1352.5px;top:197px;width:9.5px;height:17px;border-radius:5px;background:#7a7a7a"></div>
<svg style="left:1353px;top:694px" width="9.5" height="7" viewBox="0 0 10 7"><path d="M0.5 0.5 L5 6.2 L9.5 0.5 Z" fill="#6e6e6e"/></svg>

<!-- status right -->
<svg style="left:1006.5px;top:710px" width="14" height="14" viewBox="0 0 14 14"><path d="M0.5 3 V0.5 H3 M11 0.5 H13.5 V3 M13.5 11 V13.5 H11 M3 13.5 H0.5 V11" stroke="#333" fill="none" stroke-width="1"/><path d="M4 2.8 H8 L10.2 5 V11.2 H4 Z" stroke="#333" fill="none" stroke-width="1"/></svg>
<div class="t" style="left:1024.5px;top:713px;font-size:11px;color:#1f1f1f">Focus</div>
<svg style="left:1079px;top:710.5px" width="14" height="13" viewBox="0 0 14 13"><path d="M0.5 0.5 H5.5 C6.5 0.5 7 1 7 2 C7 1 7.5 0.5 8.5 0.5 H13.5 V11.5 H8.5 C7.5 11.5 7 12 7 12.5 C7 12 6.5 11.5 5.5 11.5 H0.5 Z M7 2 V12.5 M2.3 3 H5 M2.3 5.5 H5 M2.3 8 H5 M9 3 H11.7 M9 5.5 H11.7 M9 8 H11.7" stroke="#333" fill="none" stroke-width="0.9"/></svg>
<div class="a" style="left:1106.5px;top:707px;width:39.5px;height:21px;background:#dedede"></div>
<svg style="left:1120px;top:710px" width="12" height="14" viewBox="0 0 12 14"><rect x="0.5" y="0.5" width="11" height="13" stroke="#333" fill="none"/><path d="M2 3.5 H10 M2 5.5 H10 M2 7.5 H10 M2 9.5 H10 M2 11.5 H10" stroke="#333" stroke-width="1"/></svg>
<svg style="left:1159px;top:710px" width="15" height="15" viewBox="0 0 15 15"><path d="M7.5 13.5 H0.5 V0.5 H12.5 V7" stroke="#333" fill="none" stroke-width="1"/><path d="M2 3.5 H11 M2 5.5 H11 M2 7.5 H7 M2 9.5 H6 M2 11.5 H6" stroke="#333" stroke-width="1"/><circle cx="11" cy="11" r="3.5" stroke="#333" fill="#fff" stroke-width="1"/><path d="M7.5 11 H14.5 M11 7.5 V14.5 M9.3 8 C8.5 10 8.5 12 9.3 14 M12.7 8 C13.5 10 13.5 12 12.7 14" stroke="#333" stroke-width="0.8" fill="none"/></svg>
<div class="a" style="left:1192px;top:716px;width:8px;height:1.1px;background:#444"></div>
<div class="a" style="left:1205px;top:716.5px;width:100px;height:1px;background:#8a8a8a"></div>
<div class="a" style="left:1255px;top:713px;width:1px;height:7px;background:#8a8a8a"></div>
<div class="a" style="left:1232.3px;top:712px;width:5px;height:11px;background:#555;border-radius:1px"></div>
<div class="a" style="left:1310px;top:716px;width:8.5px;height:1.1px;background:#444"></div>
<div class="a" style="left:1313.7px;top:712.3px;width:1.1px;height:8.5px;background:#444"></div>
<div class="t" style="left:1331px;top:713px;font-size:10.8px;color:#1f1f1f">60%</div>

<!-- taskbar -->
<svg style="left:16px;top:740px" width="16" height="16" viewBox="0 0 16 16"><path d="M0 2.3 L7 1.3 V7.5 H0 Z M8 1.15 L16 0 V7.5 H8 Z M0 8.5 H7 V14.7 L0 13.7 Z M8 8.5 H16 V16 L8 14.85 Z" fill="#fff"/></svg>
<svg style="left:60px;top:740px" width="16" height="16" viewBox="0 0 16 16"><circle cx="10" cy="6" r="5.2" stroke="#222" stroke-width="1.2" fill="none"/><path d="M6.3 9.7 L0.5 15.5" stroke="#222" stroke-width="1.3"/></svg>
<svg style="left:407.5px;top:740.5px" width="18" height="15" viewBox="0 0 18 15"><rect x="2.5" y="3.5" width="11" height="8" stroke="#fff" fill="none"/><path d="M0 0.5 H16 M0 14.5 H16" stroke="#fff"/><path d="M16.5 3 V6 M16.5 9 V12" stroke="#fff"/></svg>
<svg style="left:455px;top:736px" width="25" height="23" viewBox="0 0 25 23"><rect x="12" y="1" width="11" height="8" fill="#9cc4e8" stroke="#e0e0e0"/><rect x="13.5" y="2.5" width="8" height="5" fill="#1f4f8f"/><rect x="1" y="11" width="11" height="8" fill="#9cc4e8" stroke="#e0e0e0"/><rect x="2.5" y="12.5" width="8" height="5" fill="#1f4f8f"/><path d="M2 20.5 H12 M13 10.5 H23" stroke="#ddd" stroke-width="1.5"/><path d="M14 6 L9 11 L13 12 L8 17" stroke="#f5d400" stroke-width="1.8" fill="none"/></svg>
<svg style="left:505px;top:739px" width="23" height="19" viewBox="0 0 23 19"><path d="M0 1.5 A1.5 1.5 0 0 1 1.5 0 H8 L10 2.5 H21.5 A1.5 1.5 0 0 1 23 4 V17.5 A1.5 1.5 0 0 1 21.5 19 H1.5 A1.5 1.5 0 0 1 0 17.5 Z" fill="#f8c94b"/><path d="M0 6 H23 V17.5 A1.5 1.5 0 0 1 21.5 19 H1.5 A1.5 1.5 0 0 1 0 17.5 Z" fill="#ffd65e"/><rect x="7" y="11" width="9" height="8" fill="#2d8bd6"/></svg>
<div class="a" style="left:496px;top:765px;width:40px;height:3px;background:#8cc2ec"></div>
<svg style="left:553px;top:737px" width="23" height="21" viewBox="0 0 23 21"><path d="M7 5 V3.5 A4.5 4.5 0 0 1 16 3.5 V5" stroke="#47a6e8" stroke-width="1.6" fill="none"/><rect x="0.5" y="5" width="22" height="16" rx="2.5" fill="#f2f2f2"/><rect x="7.5" y="9" width="3.5" height="3.5" fill="#f25022"/><rect x="12" y="9" width="3.5" height="3.5" fill="#7fba00"/><rect x="7.5" y="13.5" width="3.5" height="3.5" fill="#00a4ef"/><rect x="12" y="13.5" width="3.5" height="3.5" fill="#ffb900"/></svg>
<svg style="left:602px;top:736px" width="24" height="24" viewBox="0 0 24 24"><rect x="0" y="0" width="24" height="24" rx="2" fill="#4a4a4a"/><path d="M16.5 5 L7.5 8.3 V11.2 L16.5 14.3 V17.3 L7.5 20.5 V17.5 L13.5 15.7 L7.5 13.8 V10.5 L16.5 7.2 Z" fill="#ff9800"/></svg>
<div class="a" style="left:594px;top:765px;width:40px;height:3px;background:#8cc2ec"></div>
<svg style="left:651px;top:737px" width="23" height="22" viewBox="0 0 23 22"><path d="M5 6 L14 0.5 L22.5 5.5 V16 H5 Z" fill="#1e6fd0"/><path d="M5 8 L14 13 L22.5 8 V20 A2 2 0 0 1 20.5 22 H7 A2 2 0 0 1 5 20 Z" fill="#50b5f5"/><rect x="0" y="9" width="11" height="11" rx="1.5" fill="#0f5ab4"/><circle cx="5.5" cy="14.5" r="3" stroke="#fff" stroke-width="1.5" fill="none"/></svg>
<svg style="left:700.5px;top:736.5px" width="23" height="23" viewBox="0 0 23 23"><circle cx="11.5" cy="11.5" r="11.5" fill="#1ed760"/><path d="M5 8 C9.5 6.5 14.5 7 18.2 9.2 M6 11.5 C9.5 10.5 13.5 11 16.8 12.8 M6.8 14.8 C9.5 14 12.5 14.3 15 15.8" stroke="#000" stroke-width="1.9" stroke-linecap="round" fill="none"/></svg>
<div class="a" style="left:691.5px;top:765px;width:40.5px;height:3px;background:#8cc2ec"></div>
<svg style="left:748.5px;top:736px" width="25" height="24" viewBox="0 0 25 24"><path d="M12.5 0.5 C19.5 0.5 24.5 5.5 24.5 11 C24.5 15 21.5 17 18.5 17 C15 17 13 15.5 13 13.5 C13 12 14 11.5 14 10.5 C14 8 10.5 6.5 7.5 6.5 C3.5 6.5 0.5 9.5 0.5 12 C0.5 5.5 5.5 0.5 12.5 0.5 Z" fill="#35c1f1"/><path d="M0.5 12 C0.5 8.5 4 6.5 7.5 6.5 C11 6.5 14 8.5 14 10.5 C14 11.5 13 12 13 13.5 C13 17.5 17 20.5 20.5 20.5 C18.5 22.5 15.5 23.5 12.5 23.5 C5.5 23.5 0.5 18 0.5 12 Z" fill="#1464b4"/><path d="M13 13.5 C13 17.5 17 20.5 20.5 20.5 C22.5 18.5 24.5 15 24.5 11 C24.5 15 21.5 17 18.5 17 C15 17 13 15.5 13 13.5 Z" fill="#2fd06e" opacity="0.8"/></svg>
<svg style="left:797.5px;top:736px" width="25" height="25" viewBox="0 0 25 25"><circle cx="12.5" cy="12.5" r="12.2" fill="#db4437"/><path d="M12.5 12.5 L1.8 6.3 A12.2 12.2 0 0 0 8.5 24 Z" fill="#0f9d58"/><path d="M12.5 12.5 L8.5 24 A12.2 12.2 0 0 0 24.7 12.5 H12.5 Z" fill="#ffcd40"/><path d="M12.5 12.5 L24.7 12.5 A12.2 12.2 0 0 0 22 5 Z" fill="#db4437"/><circle cx="12.5" cy="12.5" r="5.6" fill="#fff"/><circle cx="12.5" cy="12.5" r="4.4" fill="#1a73e8"/></svg>
<div class="a" style="left:789px;top:765px;width:40px;height:3px;background:#8cc2ec"></div>
<div class="a" style="left:835px;top:728px;width:49.5px;height:40px;background:#4d4840"></div>
<div class="a" style="left:835px;top:765.5px;width:49.5px;height:2.5px;background:#9fd0f5"></div>
<svg style="left:846px;top:738px" width="25" height="20" viewBox="0 0 25 20"><rect x="6" y="0" width="19" height="20" rx="1.5" fill="#41a5ee"/><rect x="6" y="7" width="19" height="6.5" fill="#2b7cd3"/><path d="M6 13.5 H25 V18.5 A1.5 1.5 0 0 1 23.5 20 H7.5 A1.5 1.5 0 0 1 6 18.5 Z" fill="#185abd"/><rect x="0" y="4" width="13" height="13" rx="1.2" fill="#185abd"/><path d="M2.3 7 L4 14 L6.5 9.5 L9 14 L10.7 7" stroke="#fff" stroke-width="1.4" fill="none"/></svg>

<svg style="left:971.5px;top:735.5px" width="25" height="24" viewBox="0 0 25 24"><path d="M1 13 C1 7 6 4 11 4 C16 4 21 7 21 13 C19 11.5 17 11.5 16 13 C15 11.5 13 11 11 13 C9 11 7 11.5 6 13 C5 11.5 3 11.5 1 13 Z" fill="#5fb4ec"/><path d="M11 13 V21.5 A1.7 1.7 0 0 1 7.6 21.5" stroke="#a6a6a6" stroke-width="1.6" fill="none"/><path d="M16 1 L15 3.5 M20 1 L19 3.5 M24 3 L23 5.5 M21 5.5 L20 8 M18 6 L17.5 7.5" stroke="#5fb4ec" stroke-width="1.3"/></svg>
<div class="t" style="left:1004px;top:741.2px;font-size:14px;color:#fff">1 cm of rain Tue</div>
<svg style="left:1128.5px;top:744px" width="13" height="8" viewBox="0 0 13 8"><path d="M0.6 7.4 L6.5 1 L12.4 7.4" stroke="#fff" stroke-width="1.3" fill="none"/></svg>
<svg style="left:1150.5px;top:741px" width="18" height="15" viewBox="0 0 18 15"><rect x="0.7" y="0.7" width="15" height="12" stroke="#fff" stroke-width="1.2" fill="none"/><path d="M4 9 C5 5 9 4 12 5.5 M12 4 V6 H10" stroke="#fff" stroke-width="1.1" fill="none"/><circle cx="14.5" cy="12" r="3" fill="#2f8ae6"/></svg>
<svg style="left:1176px;top:745px" width="16" height="8" viewBox="0 0 16 8"><rect x="0.6" y="0.6" width="13" height="6.8" stroke="#fff" stroke-width="1.1" fill="none"/><rect x="2.3" y="2.3" width="6.5" height="3.4" fill="#fff"/><rect x="14" y="2.5" width="1.8" height="3" fill="#fff"/></svg>
<svg style="left:1198.5px;top:741px" width="18" height="15" viewBox="0 0 18 15"><path d="M0.7 4.8 H3.6 L7.8 0.8 V14.2 L3.6 10.2 H0.7 Z" stroke="#fff" stroke-width="1.1" fill="none" stroke-linejoin="round"/><path d="M10.5 4.5 C11.8 6 11.8 9 10.5 10.5 M13 2.5 C15.3 5 15.3 10 13 12.5 M15.5 0.8 C18.5 4 18.5 11 15.5 14.2" stroke="#fff" stroke-width="1.1" fill="none"/></svg>
<div class="t" style="left:1225.5px;top:741px;font-size:11.4px;color:#fff">ENG</div>
<div class="t" style="left:1269.5px;top:732.7px;font-size:12px;color:#fff">11:52</div>
<div class="t" style="left:1261.5px;top:750.5px;font-size:12px;color:#fff">10/26/25</div>
<svg style="left:1323.5px;top:738.5px" width="26" height="26" viewBox="0 0 26 26"><path d="M0.7 0.7 H16.5 V12.5 H7 L3.5 16 V12.5 H0.7 Z" fill="#fff"/><path d="M3.5 4 H13.5 M3.5 6.8 H13.5 M3.5 9.6 H10" stroke="#2d2821" stroke-width="1.2"/><circle cx="16.5" cy="17" r="8.5" fill="#2d2821" stroke="#8a8a8a" stroke-width="1.3"/><text x="16.5" y="21.5" text-anchor="middle" font-size="12.5" font-family="Liberation Sans" fill="#fff">5</text></svg>
<div class="a" style="left:1361px;top:728px;width:1px;height:40px;background:#8a8580"></div>
<!--EX_END-->
</body></html>
